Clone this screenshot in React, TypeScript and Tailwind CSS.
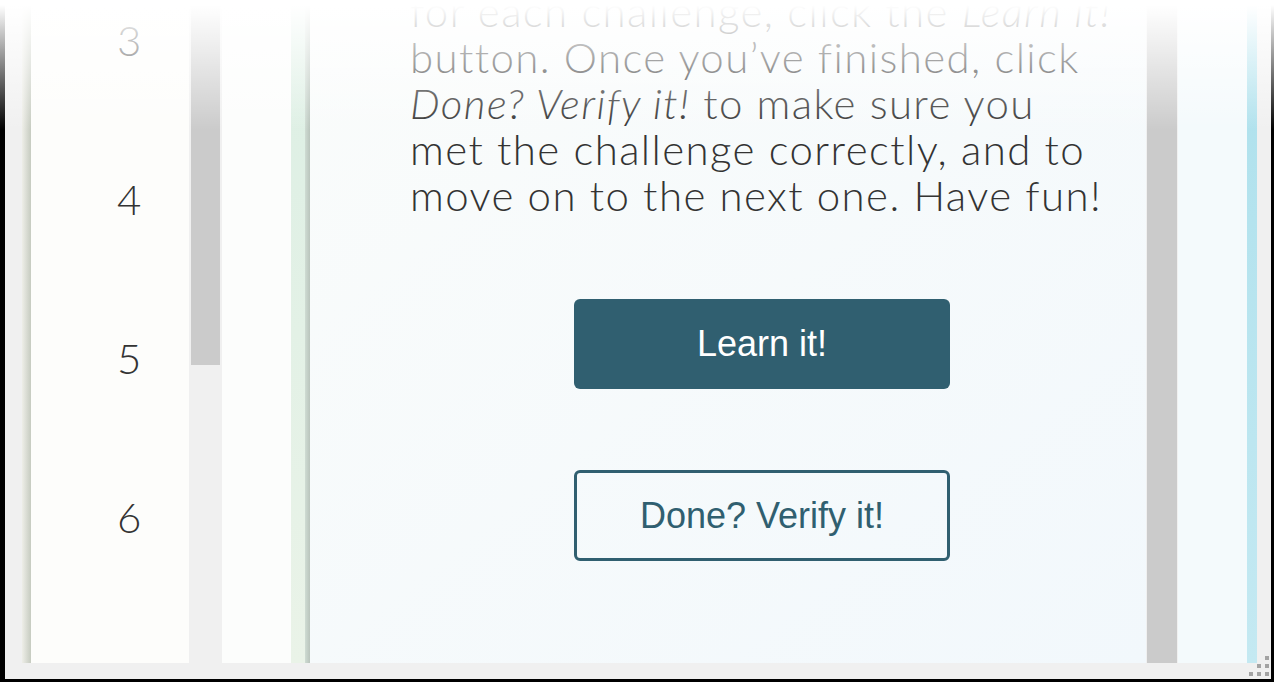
import React from 'react';

const lines = [3, 4, 5, 6, 7];

const Grip: React.FC = () => (
  <svg className="absolute left-[1248px] top-[655px]" width="22" height="22" viewBox="0 0 22 22">
    {[
      [17, 1],
      [9, 9],
      [17, 9],
      [1, 17],
      [9, 17],
      [17, 17],
    ].map(([x, y]) => (
      <rect key={`${x}-${y}`} x={x} y={y} width="4" height="4" fill="#a3a3a3" />
    ))}
  </svg>
);

const App: React.FC = () => {
  return (
    <div className="relative w-[1274px] h-[682px] bg-black overflow-hidden flex">
      <div className="ml-[5px] mr-[3px] mb-[3px] flex-1 bg-[#f0f0f0] flex flex-col">
        <div className="flex h-[663px] overflow-hidden">
          <div className="w-[17px] shrink-0 bg-[#f0f0f0]" />
          <div className="w-[9px] shrink-0 bg-linear-to-r from-[#eeeee8] to-[#c6cbc0]" />

          {/* line numbers */}
          <div className="w-[158px] shrink-0 bg-[#fdfdfb] overflow-hidden">
            <div className="-mt-[40px] flex flex-col">
              {lines.map((n) => (
                <div
                  key={n}
                  className="h-[159px] shrink-0 flex items-center pl-[86px] text-[42px] leading-none text-[#333] font-['Lato','Noto_Sans',sans-serif] font-light"
                >
                  {n}
                </div>
              ))}
            </div>
          </div>
          <div className="w-[33px] shrink-0 bg-[#f0f0f0] px-[2px]">
            <div className="h-[365px] bg-[#cbcbcb]" />
          </div>

          <div className="w-[69px] shrink-0 bg-[#fcfdfc]" />
          <div className="w-[14px] shrink-0 bg-linear-to-b from-[#dcefe4] to-[#eaf3e8]" />
          <div className="w-[5px] shrink-0 bg-linear-to-r from-[#cfdcd3] to-[#b9c4bc]" />

          {/* main panel */}
          <main className="w-[836px] shrink-0 bg-linear-to-br from-[#fafcfb] to-[#f2f8fc] overflow-hidden pl-[100px] pr-[32px]">
            <p className="-mt-[12px] text-[42px] leading-[46px] tracking-[1.4px] text-[#333] whitespace-nowrap font-['Lato','Noto_Sans',sans-serif] font-light">
              for each challenge, click the <em>Learn it!</em>
              <br />
              button. Once you’ve finished, click
              <br />
              <em>Done? Verify it!</em> to make sure you
              <br />
              met the challenge correctly, and to
              <br />
              move on to the next one. Have fun!
            </p>
            <div className="flex flex-col items-center mt-[81px] gap-[81px] font-['Liberation_Sans',Arial,sans-serif] text-[36px]">
              <button className="w-[376px] h-[90px] rounded-[6px] bg-[#305f70] text-white flex items-center justify-center">
                Learn it!
              </button>
              <button className="w-[376px] h-[91px] rounded-[6px] border-[3px] border-[#305f70] text-[#305f70] flex items-center justify-center">
                Done? Verify it!
              </button>
            </div>
          </main>

          <div className="w-[32px] shrink-0 bg-[#f0f0f0] px-[1px]">
            <div className="h-full bg-[#cbcbcb]" />
          </div>
          <div className="w-[69px] shrink-0 bg-[#f4fafc]" />
          <div className="w-[10px] shrink-0 bg-linear-to-b from-[#ace0ec] to-[#c4e9f2]" />
          <div className="flex-1 bg-[#f0f0f0]" />
        </div>
        <div className="h-[16px] bg-[#f0f0f0]" />
      </div>

      {/* top fade */}
      <div className="absolute left-0 top-0 w-full h-[130px] pointer-events-none bg-[linear-gradient(to_bottom,#ffffff_4%,rgba(255,255,255,0)_100%)]" />
      <Grip />
    </div>
  );
};

export default App;
